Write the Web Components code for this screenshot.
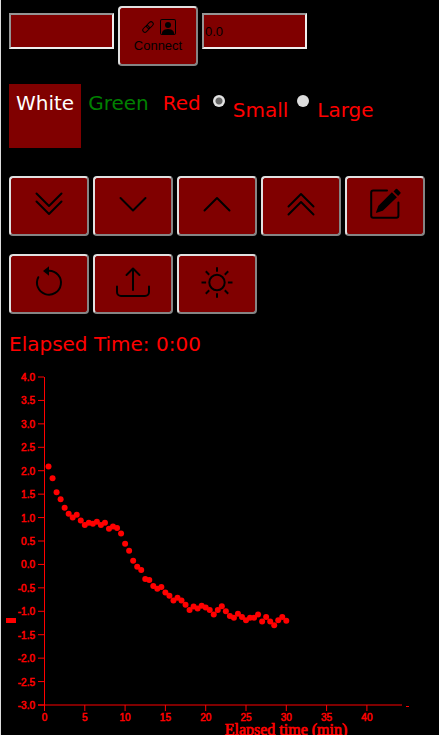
<!DOCTYPE html>
<html lang="en">
<head>
<meta charset="utf-8">
<title>Elapsed Time</title>
<style>
  html { background: #fff; }
  body { margin: 0; }
</style>
</head>
<body>
<adapt-app></adapt-app>
<script>
const ICONS = {
  'double-down': '<path d="M3.5 5.5 16 18 28.5 5.5M3.5 13.5 16 26 28.5 13.5"/>',
  'down': '<path d="M3.5 10 16 22.5 28.5 10"/>',
  'up': '<path d="M3.5 22.5 16 10 28.5 22.5"/>',
  'double-up': '<path d="M3.5 18.5 16 6 28.5 18.5M3.5 26.5 16 14 28.5 26.5"/>',
  'edit': '<g transform="scale(2)" fill="currentColor" stroke="none"><path d="M15.7 2.1a.5.5 0 0 1 0 .7L14.56 3.99l-2.3-2.3L13.4.5a.5.5 0 0 1 .7 0zM13.95 4.6l-2.5-2.5L4.74 8.91a.5.5 0 0 0-.12.2l-1.1 3a.25.25 0 0 0 .32.32l3-1.1a.5.5 0 0 0 .2-.12z"/><path d="M.6 13.9A1.5 1.5 0 0 0 2.1 15.4h11.6a1.5 1.5 0 0 0 1.5-1.5V7.2a.5.5 0 0 0-1 0v6.7a.5.5 0 0 1-.5.5H2.1a.5.5 0 0 1-.5-.5v-11.6a.5.5 0 0 1 .5-.5H9a.5.5 0 0 0 0-1H2.1A1.5 1.5 0 0 0 .6 2.3z"/></g>',
  'reset': '<path d="M5.3 11.2A12 12 0 1 0 16 4.7"/><path d="M10 5 16 .3v9.4z" fill="currentColor" stroke="none"/>',
  'upload': '<path d="M16 24V3M9.5 9 16 2.5 22.5 9M0 20.5v5.5a4 4 0 0 0 4 4h24a4 4 0 0 0 4-4v-5.5"/>',
  'sun': '<circle cx="16" cy="16.5" r="7.7"/><path d="M16 1.2v4.6M16 27.2v4.6M.5 16.5h4.6M26.9 16.5h4.6M4.8 5.3l3.4 3.4M23.8 24.3l3.4 3.4M4.8 27.7l3.4-3.4M23.8 8.7l3.4-3.4" stroke-linecap="butt"/>'
};

const define = (name, html, setup) => customElements.define(name, class extends HTMLElement {
  connectedCallback() {
    if (this.shadowRoot) return;
    const t = document.createElement('template');
    t.innerHTML = html;
    this.attachShadow({ mode: 'open' }).append(t.content.cloneNode(true));
    if (setup) setup(this, this.shadowRoot);
  }
});

define('value-field', `
  <style>
    :host { display: block; flex: 0 1 105px; min-width: 0; padding-bottom: 10px; }
    input { display: block; box-sizing: border-box; width: 100%; height: 36px; padding: 0 1px;
      border: 2px solid; border-color: #959595 #eee #eee #959595; border-radius: 0;
      background: #800000; color: #000; font: 13px "Liberation Sans", Arial, sans-serif; }
  </style>
  <input type="text">`, (host, root) => {
  const input = root.querySelector('input');
  input.value = host.getAttribute('value') || '';
  input.setAttribute('aria-label', host.getAttribute('label'));
});

define('panel-button', `
  <style>
    :host { display: block; flex: none; }
    button { display: flex; flex-direction: column; align-items: center; justify-content: center;
      box-sizing: border-box; width: 80px; height: 60px; padding: 0;
      border: 2px solid; border-color: #e0e0e0 #858585 #858585 #e0e0e0; border-radius: 4px;
      background: #800000; color: #000; font: 13px/16px "Liberation Sans", Arial, sans-serif; }
    :host([icon]) button { padding-bottom: 4px; }
    svg { display: block; width: 32px; height: 32px; overflow: visible; fill: none;
      stroke: currentColor; stroke-width: 2; stroke-linecap: round; stroke-linejoin: round; }
  </style>
  <button type="button"><slot></slot></button>`, (host, root) => {
  const icon = host.getAttribute('icon');
  if (!icon) return;
  const button = root.querySelector('button');
  button.setAttribute('aria-label', host.getAttribute('label'));
  button.innerHTML = `<svg viewBox="0 0 32 32" aria-hidden="true">${ICONS[icon]}</svg>`;
});

define('connect-icons', `
  <style>
    :host { display: flex; align-items: center; gap: 5px; padding: 0 0 3px; }
    svg { display: block; }
  </style>
  <svg width="14" height="16" viewBox="0 0 14 16" fill="none" stroke="currentColor" stroke-width="1" aria-hidden="true">
    <g transform="rotate(-45 7 8)"><rect x="0.5" y="5.8" width="7.5" height="4.4" rx="2.2"/><rect x="6" y="5.8" width="7.5" height="4.4" rx="2.2"/></g>
  </svg>
  <svg width="16" height="16" viewBox="0 0 16 16" fill="currentColor" aria-hidden="true">
    <path d="M11 6a3 3 0 1 1-6 0 3 3 0 0 1 6 0z"/>
    <path d="M2 0a2 2 0 0 0-2 2v12a2 2 0 0 0 2 2h12a2 2 0 0 0 2-2V2a2 2 0 0 0-2-2H2zm12 1a1 1 0 0 1 1 1v12a1 1 0 0 1-1 1H2a1 1 0 0 1-1-1V2a1 1 0 0 1 1-1h12z" fill-rule="evenodd"/>
    <path d="M2 15v-1c0-1 1-4 6-4s6 3 6 4v1z"/>
  </svg>`);

define('colour-tab', `
  <style>
    :host { display: block; height: 64px; }
    :host([selected]) { background: #800000; }
    button { display: block; padding: 7px; border: 0; background: none; color: inherit; font: inherit; }
  </style>
  <button type="button"><slot></slot></button>`, (host, root) =>
  root.querySelector('button').setAttribute('aria-pressed', host.hasAttribute('selected')));

define('size-picker', `
  <style>
    :host { display: flex; gap: 9px; padding: 11px 0 0 5px; }
    label { display: flex; align-items: flex-start; gap: 8px; }
    span { padding-top: 3px; }
    input { appearance: none; box-sizing: border-box; width: 12px; height: 12px; margin: 0;
      border-radius: 50%; background: #ddd; }
    input:checked { background: radial-gradient(circle, #666 0 3px, #e2e2e2 4px); }
  </style>
  <label><input type="radio" name="size" checked><span>Small</span></label>
  <label><input type="radio" name="size"><span>Large</span></label>`);

define('light-chart', `
  <style>
    :host { display: block; max-width: 400px; margin-bottom: -1px; background: #000; }
    svg { display: block; width: 100%; height: auto; overflow: visible; }
    .tick { font: 10px "Liberation Sans", Arial, sans-serif; fill: red; stroke: red; stroke-width: .5; }
    .title { font: 16px "Liberation Serif", "Times New Roman", serif; fill: red; stroke: red; stroke-width: .7; }
    .axis { stroke: red; fill: none; }
  </style>
  <svg viewBox="0 0 400 370" role="img" aria-label="Value by elapsed time">
    <clipPath id="edge"><rect width="400" height="369"/></clipPath>
    <g class="axis"></g><g class="tick"></g><g class="dots" fill="red"></g>
    <rect y="252" width="10" height="5" fill="red"/>
    <rect x="400" y="340" width="3" height="1" fill="red"/>
    <g clip-path="url(#edge)"><text class="title" x="280" y="369" text-anchor="middle">Elapsed time (min)</text></g>
  </svg>`, (host, root) => {
  const x = t => 38.5 + t * 8.06, y = v => 11 + (4 - v) * 328 / 7;
  let lines = 'M38.5 11V345M32 339H396', labels = '';
  for (let v = 4; v >= -3; v -= .5) {
    lines += `M32 ${y(v)}h6`;
    labels += `<text x="29" y="${y(v) + 4}" text-anchor="end">${v.toFixed(1)}</text>`;
  }
  for (let t = 0; t <= 40; t += 5) {
    lines += `M${x(t)} 339v6`;
    labels += `<text x="${x(t)}" y="355" text-anchor="middle">${t}</text>`;
  }
  root.querySelector('.axis').innerHTML = `<path d="${lines}"/>`;
  root.querySelector('.tick').innerHTML = labels;
  const values = [2.09,1.84,1.54,1.39,1.21,1.08,1.00,1.06,.94,.84,.89,.87,.91,.84,.89,.76,.81,.78,.66,.44,.29,
    .08,-.05,-.12,-.31,-.33,-.46,-.52,-.48,-.60,-.67,-.77,-.71,-.77,-.86,-.97,-.90,-.94,-.88,-.92,-.97,-1.07,
    -.97,-.89,-1.00,-1.10,-1.14,-1.05,-1.12,-1.19,-1.14,-1.14,-1.07,-1.22,-1.12,-1.22,-1.30,-1.19,-1.12,-1.20];
  root.querySelector('.dots').innerHTML = values.map((v, i) =>
    `<circle cx="${x((i + 1) / 2)}" cy="${y(v)}" r="3"/>`).join('');
});

define('adapt-app', `
  <style>
    :host { display: block; border-left: 1px solid #ddd; background: #000; color: red;
      font: 20px/24px "DejaVu Sans", sans-serif; }
    main { display: flow-root; }
    header { display: flex; align-items: center; gap: 4px; padding: 6px 8px 0; }
    .options { display: flex; flex-wrap: wrap; padding: 18px 8px 0; }
    .actions { display: flex; flex-wrap: wrap; gap: 18px 4px; padding: 28px 8px 18px; }
    .white { color: #fff; }
    .green { color: green; }
    .time { margin: 0; padding: 0 8px 10px; }
    light-chart { margin-left: 5px; }
  </style>
  <main>
    <header>
      <value-field label="Device"></value-field>
      <panel-button><connect-icons></connect-icons>Connect</panel-button>
      <value-field label="Reading" value="0.0"></value-field>
    </header>
    <div class="options">
      <colour-tab class="white" selected>White</colour-tab>
      <colour-tab class="green">Green</colour-tab>
      <colour-tab>Red</colour-tab>
      <size-picker></size-picker>
    </div>
    <div class="actions">
      <panel-button icon="double-down" label="Much darker"></panel-button>
      <panel-button icon="down" label="Darker"></panel-button>
      <panel-button icon="up" label="Brighter"></panel-button>
      <panel-button icon="double-up" label="Much brighter"></panel-button>
      <panel-button icon="edit" label="Edit"></panel-button>
      <panel-button icon="reset" label="Restart"></panel-button>
      <panel-button icon="upload" label="Share"></panel-button>
      <panel-button icon="sun" label="Brightness"></panel-button>
    </div>
    <p class="time">Elapsed Time: 0:00</p>
    <light-chart></light-chart>
  </main>`);
</script>
</body>
</html>
